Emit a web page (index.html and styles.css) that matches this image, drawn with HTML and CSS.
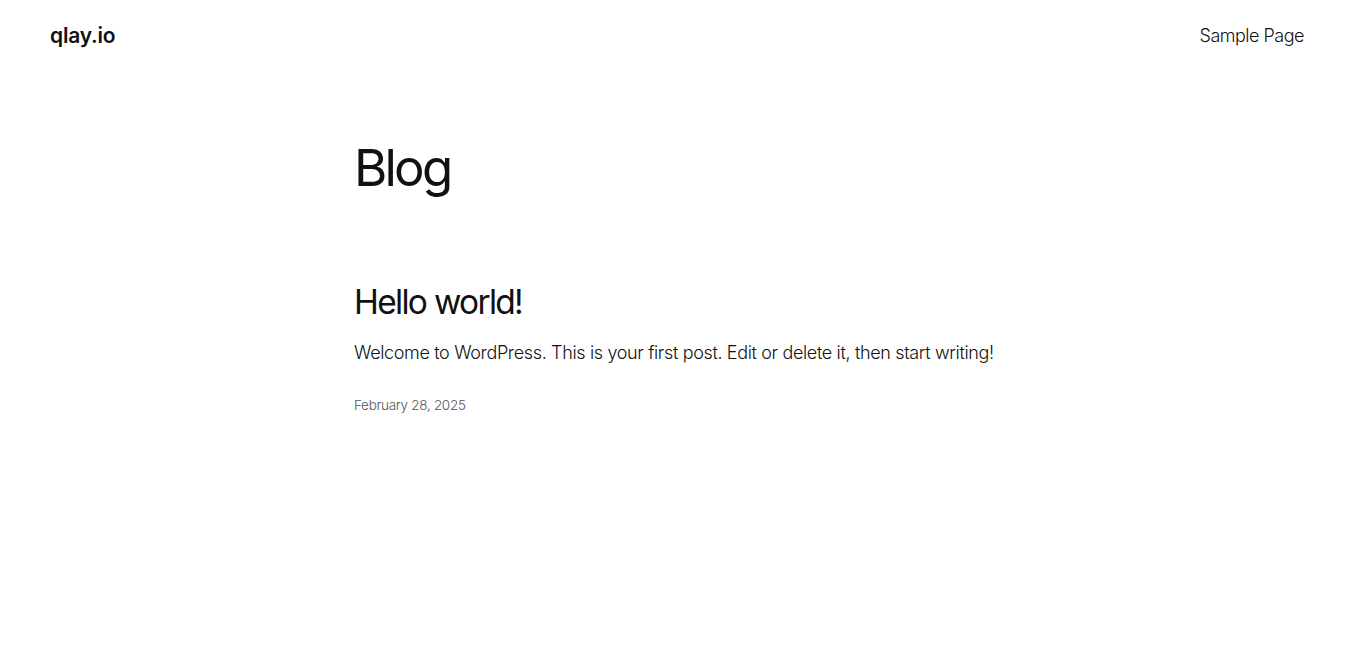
FILE: index.html
```html
<!DOCTYPE html>
<html lang="en">

<head>
    <meta charset="UTF-8">
    <meta name="viewport" content="width=device-width, initial-scale=1.0">
    <title>Blog – qlay.io</title>
    <link rel="stylesheet" href="styles.css">
</head>

<body>
    <header class="site-header">
        <a class="site-title" href="#">qlay.io</a>
        <nav class="site-nav">
            <a href="#">Sample Page</a>
        </nav>
    </header>

    <main class="site-main">
        <h1 class="page-title">Blog</h1>

        <article class="post">
            <h2 class="post-title"><a href="#">Hello world!</a></h2>
            <p class="post-excerpt">Welcome to WordPress. This is your first post. Edit or delete it, then start writing!</p>
            <time class="post-date" datetime="2025-02-28">February 28, 2025</time>
        </article>
    </main>
</body>

</html>
```

FILE: styles.css
```css
html {
    font-family: Inter, 'Noto Sans', sans-serif;
    color: #111111;
    background: #ffffff;
}

body {
    margin: 0;
    padding-right: 13px;
}

a {
    color: inherit;
    text-decoration: none;
}

.site-header {
    display: flex;
    justify-content: space-between;
    align-items: center;
    padding: 20px 49px 0 50px;
    height: 30px;
}

.site-title {
    font-size: 21px;
    font-weight: 600;
    letter-spacing: -0.2px;
}

.site-nav a {
    font-size: 18px;
    font-weight: 300;
    letter-spacing: -0.5px;
}

.site-main {
    width: 645px;
    margin: 0 auto;
    padding-top: 87px;
}

.page-title {
    margin: 0;
    font-size: 51px;
    font-weight: 400;
    line-height: 1.2;
    letter-spacing: -2.8px;
}

.post {
    margin-top: 84px;
}

.post-title {
    margin: 0;
    font-size: 33.5px;
    font-weight: 400;
    line-height: 1.2;
    letter-spacing: -1.7px;
}

.post-excerpt {
    margin: 17px 0 0 0;
    font-size: 18px;
    font-weight: 300;
    line-height: 1.5;
    letter-spacing: -0.35px;
}

.post-date {
    display: block;
    margin-top: 31px;
    font-size: 13.5px;
    font-weight: 300;
    color: #555555;
    letter-spacing: -0.3px;
}
```
